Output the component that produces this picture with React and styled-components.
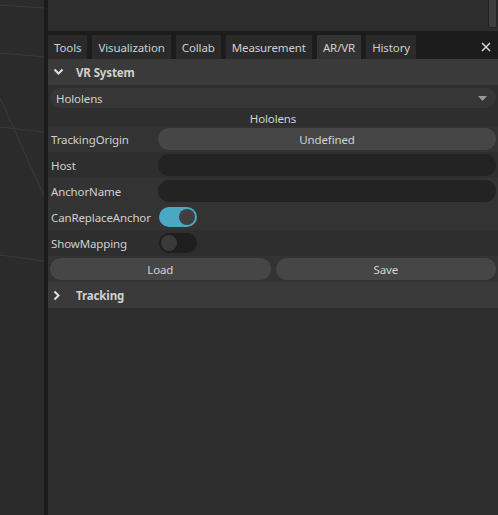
import React from "react";
import styled, { createGlobalStyle } from "styled-components";

const Global = createGlobalStyle`
  html, body { margin: 0; padding: 0; background: #2b2b2b; overflow: hidden; }
  * { box-sizing: border-box; }
  body {
    font-family: "Noto Sans", "Open Sans", sans-serif;
    font-size: 11.5px;
    letter-spacing: -0.12px;
    color: #d2d2d2;
  }
`;

const Root = styled.div`
  display: flex;
  width: 498px;
  height: 515px;
`;

const Viewport = styled.div`
  width: 44px;
  background: #2b2b2b;
  svg { display: block; }
`;

const Splitter = styled.div`
  width: 4px;
  background: #1b1b1b;
`;

const Panel = styled.div`
  flex: 1;
  display: flex;
  flex-direction: column;
  background: #2e2e2e;
  min-width: 0;
`;

const TopArea = styled.div`
  height: 31px;
  background: #2d2d2d;
  display: flex;
  justify-content: flex-end;
  padding-right: 1px;
`;

const ScrollThumb = styled.div`
  width: 9px;
  height: 28px;
  background: #3e3e3e;
  border: 1px solid #222;
  border-top: none;
  border-radius: 0 0 2px 2px;
`;

const TabBar = styled.div`
  height: 28px;
  background: #1c1c1c;
  display: flex;
  align-items: flex-end;
  gap: 5px;
  padding-right: 6px;
`;

const Tab = styled.div`
  height: 24px;
  padding: 0 6px;
  display: flex;
  align-items: center;
  background: ${(p) => (p.$active ? "#333333" : "#2a2a2a")};
  color: #cfcfcf;
  white-space: nowrap;
`;

const Close = styled.div`
  margin-left: auto;
  align-self: center;
  margin-top: 4px;
  margin-right: 1px;
  display: flex;
`;

const Header = styled.div`
  height: 26px;
  background: #3a3a3a;
  display: flex;
  align-items: center;
  padding-left: 5px;
  font-weight: 700;
  color: #d0d0d0;
`;

const Chevron = styled.span`
  width: 23px;
  display: flex;
  align-items: center;
`;

const Body = styled.div`
  display: flex;
  flex-direction: column;
  padding: 3px 2px 0;
`;

const Combo = styled.div`
  height: 20px;
  border-radius: 10px;
  background: #363636;
  display: flex;
  align-items: center;
  padding: 0 9px 0 6px;
  color: #d0d0d0;
  justify-content: space-between;
`;

const CenterLabel = styled.div`
  height: 18px;
  padding-top: 2px;
  display: flex;
  align-items: center;
  justify-content: center;
  color: #d2d2d2;
`;

const Row = styled.div`
  height: 26px;
  display: flex;
  align-items: center;
  margin: 0 -2px;
  padding: 0 2px 0 3px;
  background: ${(p) => (p.$alt ? "#333333" : "#2e2e2e")};
`;

const Label = styled.div`
  width: 107px;
  flex-shrink: 0;
  color: #d0d0d0;
  white-space: nowrap;
`;

const Pill = styled.div`
  flex: 1;
  height: 22px;
  border-radius: 11px;
  display: flex;
  align-items: center;
  justify-content: center;
  background: ${(p) => (p.$input ? "#232323" : "#464646")};
  color: #d2d2d2;
`;

const ButtonRow = styled(Row)`
  padding: 0 2px;
  gap: 5px;
`;

const Toggle = styled.div`
  width: 38px;
  height: 20px;
  border-radius: 10px;
  margin-left: 1px;
  background: ${(p) => (p.$on ? "#4aa8c2" : "#1f1f1f")};
  display: flex;
  align-items: center;
  justify-content: ${(p) => (p.$on ? "flex-end" : "flex-start")};
  padding: 0 2px;
`;

const Knob = styled.div`
  width: 16px;
  height: 16px;
  border-radius: 50%;
  background: ${(p) => (p.$on ? "#3f3f3f" : "#3a3a3a")};
`;

const ChevronDown = () => (
  <svg width="11" height="8" viewBox="0 0 11 8">
    <path d="M1.5 1.5 L5.5 5.5 L9.5 1.5" stroke="#e0e0e0" strokeWidth="2" fill="none" />
  </svg>
);

const ChevronRight = () => (
  <svg width="8" height="11" viewBox="0 0 8 11">
    <path d="M1.5 1.5 L5.5 5.5 L1.5 9.5" stroke="#e0e0e0" strokeWidth="2" fill="none" />
  </svg>
);

export default function App() {
  const tabs = ["Tools", "Visualization", "Collab", "Measurement", "AR/VR", "History"];
  return (
    <>
      <Global />
      <Root>
        <Viewport>
          <svg width="44" height="515" viewBox="0 0 44 515">
            <g stroke="#3a3a3a" strokeWidth="1" fill="none">
              <line x1="0" y1="5" x2="44" y2="8" />
              <line x1="0" y1="53" x2="44" y2="57" />
              <line x1="0" y1="127" x2="44" y2="132" />
              <line x1="0" y1="98" x2="44" y2="196" />
              <line x1="0" y1="255" x2="44" y2="261" />
            </g>
          </svg>
        </Viewport>
        <Splitter />
        <Panel>
          <TopArea>
            <ScrollThumb />
          </TopArea>
          <TabBar>
            {tabs.map((t) => (
              <Tab key={t} $active={t === "AR/VR"}>
                {t}
              </Tab>
            ))}
            <Close>
              <svg width="10" height="10" viewBox="0 0 10 10">
                <path d="M1 1 L9 9 M9 1 L1 9" stroke="#d8d8d8" strokeWidth="1.5" />
              </svg>
            </Close>
          </TabBar>
          <Header>
            <Chevron>
              <ChevronDown />
            </Chevron>
            VR System
          </Header>
          <Body>
            <Combo>
              Hololens
              <svg width="9" height="5" viewBox="0 0 9 5">
                <path d="M0 0 L9 0 L4.5 5 Z" fill="#9a9a9a" />
              </svg>
            </Combo>
            <CenterLabel>Hololens</CenterLabel>
            <Row $alt>
              <Label>TrackingOrigin</Label>
              <Pill>Undefined</Pill>
            </Row>
            <Row>
              <Label>Host</Label>
              <Pill $input />
            </Row>
            <Row $alt>
              <Label>AnchorName</Label>
              <Pill $input />
            </Row>
            <Row $alt>
              <Label>CanReplaceAnchor</Label>
              <Toggle $on>
                <Knob $on />
              </Toggle>
            </Row>
            <Row>
              <Label>ShowMapping</Label>
              <Toggle>
                <Knob />
              </Toggle>
            </Row>
            <ButtonRow $alt>
              <Pill>Load</Pill>
              <Pill>Save</Pill>
            </ButtonRow>
          </Body>
          <Header>
            <Chevron>
              <ChevronRight />
            </Chevron>
            Tracking
          </Header>
        </Panel>
      </Root>
    </>
  );
}
